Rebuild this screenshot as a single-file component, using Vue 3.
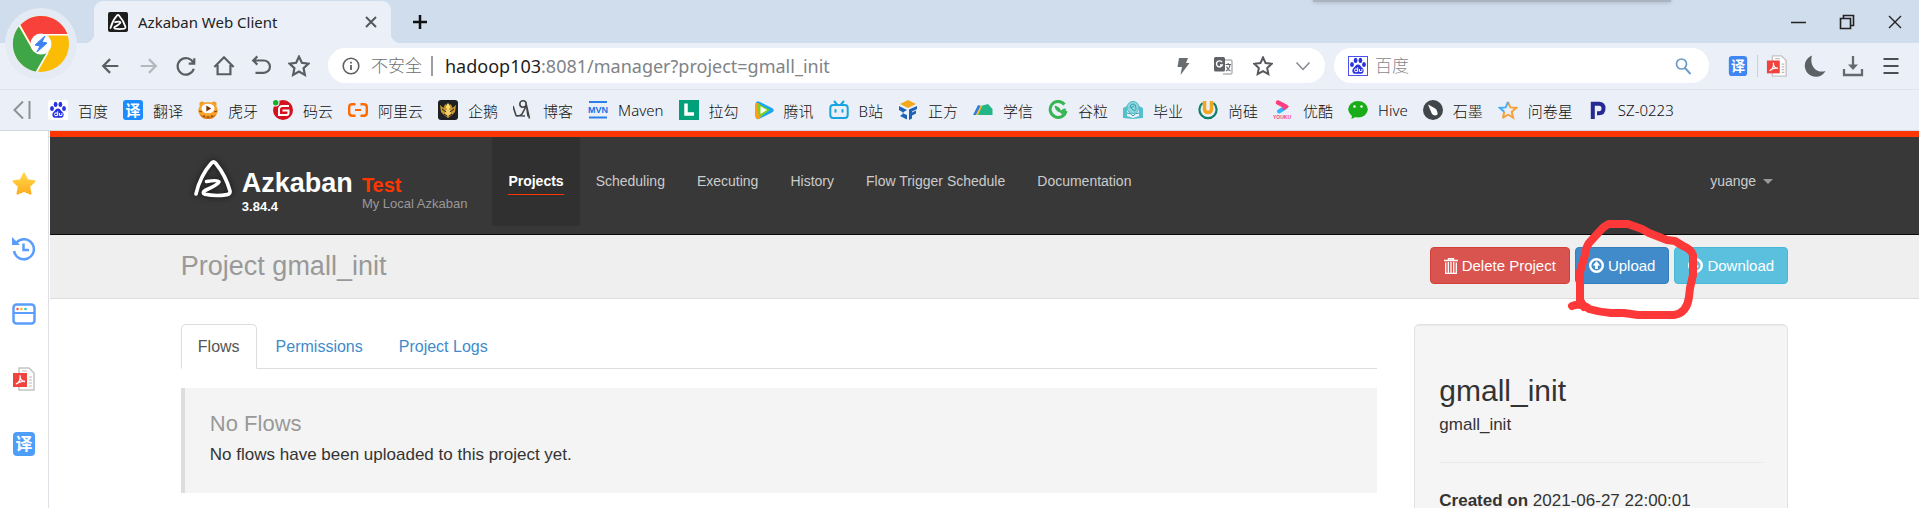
<script setup>
import { ref } from 'vue'

const T = (s, x, y, size, fill) =>
  `<text x="${x}" y="${y}" font-size="${size}" fill="${fill}" text-anchor="middle" font-weight="700" font-family="'Liberation Sans','Noto Sans CJK SC',sans-serif">${s}</text>`

const paw = `<g fill="#2932e1"><ellipse cx="4" cy="8.6" rx="1.9" ry="2.5"/><ellipse cx="7.6" cy="4.4" rx="1.9" ry="2.6"/><ellipse cx="12.4" cy="4.4" rx="1.9" ry="2.6"/><ellipse cx="16" cy="8.6" rx="1.9" ry="2.5"/><path d="M10 8.4c2 0 2.6 1.9 4.2 3.300 1.800 1.600 1.700 3.500 1 4.700-1 1.700-3 1.400-5.200 1.400s-4.200.3-5.200-1.400c-.7-1.200-.8-3.100 1-4.700C7.400 10.300 8 8.400 10 8.400z"/></g><g fill="none" stroke="#fff" stroke-width="1"><circle cx="8" cy="14.300" r="1.500"/><path d="M9.700 11.300v4.500M11.500 13v2.500h2.400V13"/></g>`
const pdf = `<path d="M7 1h10l5 5v17H7z" fill="#fff" stroke="#c4c4c4" stroke-width="1.500"/><path d="M17 10h3M17 13h3M17 16h3M17 19h3M10 4h5" stroke="#bbb" stroke-width="1.200"/><rect x="1" y="6" width="14" height="14" fill="#f0423f"/><path d="M4 17c3-1 5-4.500 4-8.500 0 4 2 6 5 6-3-.5-6.500.5-9 2.500z" fill="none" stroke="#fff" stroke-width="1.300"/>`

const bookmarks = [
  { name: '百度', svg: `<rect width="20" height="20" rx="2" fill="#fff"/>${paw}` },
  { name: '翻译', svg: `<rect width="20" height="20" rx="3" fill="#1a8cff"/>${T('译', 10, 15.5, 15, '#fff')}` },
  { name: '虎牙', svg: `<circle cx="4" cy="4" r="2.600" fill="#f59b22"/><circle cx="16" cy="4" r="2.600" fill="#f59b22"/><ellipse cx="10" cy="10.500" rx="9.800" ry="8.500" fill="#f7a531"/><path d="M2 14c4 3 12 3 16 0-1 4-4 5-8 5s-7-1-8-5z" fill="#dd7a13"/><ellipse cx="10" cy="8.500" rx="6.500" ry="4.800" fill="#fff"/><path d="M8.300 5.500l5 3-5 3z" fill="#7a3510"/><path d="M1 11l3 1M19 11l-3 1M6 17v-2M10 18v-2M14 17v-2" stroke="#8c4510" stroke-width="1.200"/>` },
  { name: '码云', svg: `<circle cx="10" cy="10" r="10" fill="#d6101e"/><circle cx="2.500" cy="2.500" r="4" fill="#edf1f8"/><circle cx="2.700" cy="2.700" r="2.700" fill="#13b027"/><path d="M16 6H9.500Q6 6 6 9.500V15h7.500q2 0 2-2v-2.500H9.500" fill="none" stroke="#fff" stroke-width="2"/>` },
  { name: '阿里云', svg: `<g fill="none" stroke="#ff6a00" stroke-width="2.400"><path d="M7.500 4.200H4.200Q1.200 4.200 1.200 7.200v5.600q0 3 3 3h3.300M12.500 4.200h3.300q3 0 3 3v5.600q0 3-3 3h-3.300"/><path d="M7 10h6" stroke-width="2"/></g>` },
  { name: '企鹅', svg: `<rect width="20" height="20" rx="3" fill="#1f2024"/><path d="M2 5l3.500 3L7 4.500h6L14.500 8 18 5l-1 7-3 3-4 3-4-3-3-3z" fill="#c9962c"/><path d="M10 2.500l2 5-2 3-2-3z" fill="#ffe27a"/><circle cx="10" cy="12.500" r="3" fill="#f4cf68"/><path d="M4 9l4 3M16 9l-4 3M6 14l3 2M14 14l-3 2" stroke="#1f2024"/>` },
  { name: '博客', svg: `<g fill="none" stroke="#444" stroke-width="1.600"><circle cx="10" cy="4" r="3.200"/><path d="M0 6l3 9.500q3 1.500 6-1.500l4.500-8.500L16.500 18.500M13.500 5.500l1.500 11M3 15.500l9 .5"/></g>` },
  { name: 'Maven', svg: `<path d="M1 2h18M1 17.500h18" stroke="#2a80e8" stroke-width="2"/>${T('MVN', 10, 13.2, 9, '#1672e4')}` },
  { name: '拉勾', svg: `<rect width="20" height="20" fill="#00a07a"/><path d="M7 3.500v10.500h8" fill="none" stroke="#fff" stroke-width="3.500"/>` },
  { name: '腾讯', svg: `<path d="M1.500 4Q2 0 6 2l12 6q3.500 2 0 4.500L6 18.500q-4 2-4.500-2Q.5 10 1.500 4z" fill="#18a5f5"/><path d="M1.200 5Q1.500 2 4 3l9 7-8 9q-3 .8-3.500-2.500Q.7 10 1.200 5z" fill="#ff9c1a"/><path d="M3.500 3.500l12.500 6.500L5 17.500z" fill="#7ad21f"/><path d="M6.500 6.300l6.500 3.700-6.500 4z" fill="#fff"/>` },
  { name: 'B站', svg: `<g fill="none" stroke="#16a5df" stroke-width="2" stroke-linecap="round"><rect x="1.300" y="5" width="17.400" height="13" rx="3"/><path d="M5.500 1.500L8 4.500M14.500 1.500L12 4.500M6.500 10v1.800M13.500 10v1.800"/></g>` },
  { name: '正方', svg: `<path d="M10 0l8 4-8 4-8-4z" fill="#f6a81b"/><path d="M1 6l8 4-5 3 5 2v4.500l-7-3.500 4-3-5-3zM11 9.500L19 6v3l-5 2.500v1l4-2v3l-4 2v3l-3 1.500z" fill="#1f62b5"/>` },
  { name: '学信', svg: `<path d="M0 15L5 5l3 1-5 9z" fill="#2f7be0"/><path d="M3 15L8 5l2 1-4 9z" fill="#f6be28"/><path d="M5 15l4.500-9.500L15 4l4.500 5v6z" fill="#22b588"/>` },
  { name: '谷粒', svg: `<path d="M16.500 4.500A8 8 0 1 0 18 11" fill="none" stroke="#36b552" stroke-width="3"/><path d="M7 6q5 1 6 6-5 0-6-6zM13 13q0-4 4.500-4-.5 5-4.500 4zM12 11l3 4" fill="#36b552" stroke="#36b552"/>` },
  { name: '毕业', svg: `<path d="M0 8l4-2v10l6 2 6-2V6l4 2v10l-10 1L0 18z" fill="#55bfcb"/><circle cx="10" cy="7.500" r="6" fill="#8fd7df" stroke="#4cb6c4"/><path d="M7 8q0-4 3-4t3 4-3 2-1-3 2 0M4 13q4 0 6 3 2-3 6-3" fill="none" stroke="#2c9fae"/>` },
  { name: '尚硅', svg: `<path d="M4.500 3A8.600 8.600 0 1 0 15.500 3" fill="none" stroke="#0d7f68" stroke-width="2.200"/><path d="M6.500 1v7.500q0 4 3.500 4t3.500-4V1" fill="none" stroke="#f4a51f" stroke-width="3.500"/>` },
  { name: '优酷', svg: `<path d="M5 2.500l7.500 4" fill="none" stroke="#ff3d7f" stroke-width="4.500" stroke-linecap="round"/><path d="M6 11.500l7-4.500" stroke="#2bb4ff" stroke-width="4" stroke-linecap="round"/><path d="M11 5.500l2 1.200-2 1.500" fill="none" stroke="#ff3d7f" stroke-width="3.500" stroke-linecap="round"/>${T('YOUKU', 9, 19, 5, '#f5427e')}` },
  { name: 'Hive', svg: `<ellipse cx="10" cy="9.300" rx="9.800" ry="8.300" fill="#1aad19"/><path d="M4 15l-.5 4 5-2.500z" fill="#1aad19"/><circle cx="6.500" cy="6.500" r="1.200" fill="#fff"/><circle cx="13.500" cy="6.500" r="1.200" fill="#fff"/>` },
  { name: '石墨', svg: `<circle cx="10" cy="10" r="10" fill="#41464b"/><path d="M5 4.500l6.500 3.500q3.500 2.500 3 6.500-3 2-5.500-.5z" fill="#fff"/>` },
  { name: '问卷星', svg: `<path d="M10 2l2.300 5.400 5.900.5-4.500 3.900 1.400 5.800L10 14.500" fill="none" stroke="#f6a13a" stroke-width="2"/><path d="M4.500 18.200l5.500-3.700M4.900 17.600l1.400-5.800" stroke="#f6a13a" stroke-width="2"/><path d="M6.300 11.800L1.800 7.900l5.900-.5L10 2" fill="none" stroke="#4aaef5" stroke-width="2"/>` },
  { name: 'SZ-0223', svg: `<path d="M4.800 19V3.800h6.200q4.500 0 4.500 4.700T11 13.200h-2" fill="none" stroke="#262a94" stroke-width="4"/>` },
]

const navButtons = [
  { label: '后退', d: 'M20 12H4M11 4.500L3.500 12l7.500 7.500', c: '#5a5d62' },
  { label: '前进', d: 'M4 12h16M13 4.500l7.500 7.500-7.500 7.500', c: '#b4b8be' },
  { label: '刷新', d: 'M20 8.500A9 9 0 1 0 20.500 15M21 3.500v6h-6', c: '#5a5d62' },
  { label: '主页', d: 'M1.500 13L12 2.500 22.500 13M5 11v10h14V11', c: '#5a5d62' },
  { label: '恢复', d: 'M4 6h11a6 6 0 0 1 0 13.500H6M8 1.500L3.500 6 8 10.500', c: '#5a5d62' },
  { label: '收藏', d: 'M12 1.800l3.100 6.700 7.300.9-5.400 5 1.400 7.300-6.400-3.600-6.400 3.600L7 14.400l-5.400-5 7.300-.9z', c: '#5a5d62' },
]

const yi = (c) => `<rect x="1" width="22" height="24" rx="4" fill="${c}"/>${T('译', 12, 18, 17, '#fff')}`
const sideTools = [
  { label: '收藏夹', svg: `<defs><linearGradient id="sg" x2="0" y2="1"><stop stop-color="#ffd84a"/><stop offset="1" stop-color="#ffad1f"/></linearGradient></defs><path d="M12 1.500l3.200 6.700 7.300 1-5.300 5.100 1.300 7.400L12 18.800l-6.500 2.900 1.300-7.400L1.500 9.200l7.300-1z" fill="url(#sg)" stroke="url(#sg)" stroke-width="2" stroke-linejoin="round"/>` },
  { label: '历史', svg: `<path d="M4.500 5.500A10 10 0 1 1 2 14" fill="none" stroke="#5a9dfa" stroke-width="2.500"/><path d="M0 0l8 8H0z" fill="#5a9dfa"/><path d="M11.500 6.500V13H17" fill="none" stroke="#5a9dfa" stroke-width="2.500"/>` },
  { label: '窗口', svg: `<rect x="1.500" y="2.500" width="21" height="19" rx="3" fill="#fff" stroke="#5a9dfa" stroke-width="2.500"/><path d="M2 11h20" stroke="#5a9dfa" stroke-width="2"/><circle cx="5.500" cy="7" r="1.300" fill="#f55"/><circle cx="9.500" cy="7" r="1.300" fill="#fb3"/><circle cx="13.500" cy="7" r="1.300" fill="#2cb"/>` },
  { label: 'PDF', svg: pdf },
  { label: '翻译', svg: yi('#4d9ef9') },
]

const menu = ['Projects', 'Scheduling', 'Executing', 'History', 'Flow Trigger Schedule', 'Documentation']
const tabs = ['Flows', 'Permissions', 'Project Logs']
const activeTab = ref('Flows')
const query = ref('')
</script>

<template>
  <div class="window">
    <header class="chrome">
      <div class="tabstrip">
        <div class="tab">
          <svg class="i20" viewBox="0 0 20 20"><rect width="20" height="20" rx="2" fill="#1d1d1d" /><path d="M2.500 16Q4.500 8.500 9 3.500q1-1 2 0Q15.500 8.500 17.500 15q.2 1.300-1.200 1.600-5 .9-9.300 0c-1.500-.6-.5-1.400 0-1.800q5-2.800 5.500-4.300-.5-1.300-5.500-.4" fill="none" stroke="#fff" stroke-width="1.800" stroke-linecap="round" stroke-linejoin="round" /></svg>
          <span class="tab-title">Azkaban Web Client</span>
          <button class="bare" aria-label="关闭标签页"><svg width="12" height="12" viewBox="0 0 12 12"><path d="M1 1l10 10M11 1L1 11" stroke="#55585c" stroke-width="2" /></svg></button>
        </div>
        <button class="bare newtab" aria-label="新标签页"><svg width="16" height="16" viewBox="0 0 16 16"><path d="M8 1v14M1 8h14" stroke="#111" stroke-width="2.500" /></svg></button>
        <div class="peek"></div>
        <div class="wincontrols">
          <button class="bare" aria-label="最小化"><svg width="16" height="16" viewBox="0 0 16 16"><path d="M0 8.500h15" stroke="#222" stroke-width="1.500" /></svg></button>
          <button class="bare" aria-label="还原"><svg width="16" height="16" viewBox="0 0 16 16"><path d="M1.500 4.500h10v10h-10zM4.500 4V1.500h10v10H12" fill="none" stroke="#222" stroke-width="1.600" /></svg></button>
          <button class="bare" aria-label="关闭"><svg width="16" height="16" viewBox="0 0 16 16"><path d="M2 2l12 12M14 2L2 14" stroke="#222" stroke-width="1.400" /></svg></button>
        </div>
      </div>

      <svg class="brand" viewBox="0 0 72 72">
        <circle cx="36" cy="36" r="36" fill="#e4ebf5" />
        <circle cx="36" cy="36" r="28" fill="#fbbc05" />
        <path d="M15.500 17A28 28 0 0 1 62.500 26.500H36L26 36z" fill="#f8413a" />
        <path d="M14 18.500A28 28 0 0 0 32 63.700L43 44 28 43z" fill="#3fa648" />
        <path d="M63 26.800H36M14.500 17.500L28 41M31.500 64L43 44" fill="none" stroke="#fff" stroke-width="1.600" />
        <circle cx="36" cy="36" r="10.500" fill="#fff" />
        <path d="M40 28l-10 9 5 1-3 6 10-9-5-1z" fill="#3d82f5" stroke="#3d82f5" />
      </svg>

      <div class="toolbar">
        <nav class="navs" aria-label="导航">
          <button v-for="b in navButtons" :key="b.label" class="bare" :aria-label="b.label">
            <svg width="22" height="22" viewBox="0 0 24 24"><path :d="b.d" fill="none" :stroke="b.c" stroke-width="2.400" /></svg>
          </button>
        </nav>
        <div class="pill address">
          <svg width="18" height="18" viewBox="0 0 18 18"><circle cx="9" cy="9" r="7.800" fill="none" stroke="#5c5f63" stroke-width="1.600" /><path d="M9 8v5M9 4.800v1.700" stroke="#5c5f63" stroke-width="1.800" /></svg>
          <span class="insecure">不安全</span>
          <div class="url" role="textbox" aria-label="地址"><b>hadoop103</b>:8081/manager?project=gmall_init</div>
          <div class="pill-icons">
            <button class="bare" aria-label="极速模式"><svg width="20" height="20" viewBox="0 0 20 20"><path d="M6 2h9l-2 5h3.500L7.500 19 9 11H4.500z" fill="#6a6d70" /></svg></button>
            <button class="bare" aria-label="翻译网页"><svg width="20" height="20" viewBox="0 0 20 20"><path d="M9 4h9q1 0 1 1v12q0 1-1 1h-8" fill="#fff" stroke="#8a8d91" /><rect x="1" y="1" width="11" height="14.500" rx="1.500" fill="#5f6368" /><path d="M9 6.200a3 3 0 1 0 .3 2.800H7" fill="none" stroke="#fff" stroke-width="1.400" /><path d="M12.500 8.500H18M15.200 7v1.500M13 15q3.500-2 4-6.500M13.500 10.500q1 3 4 4.500" fill="none" stroke="#5f6368" stroke-width="1.100" /></svg></button>
            <button class="bare" aria-label="添加收藏"><svg width="20" height="20" viewBox="0 0 24 24"><path :d="navButtons[5].d" fill="none" stroke="#55585c" stroke-width="2.400" /></svg></button>
            <button class="bare" aria-label="展开"><svg width="20" height="20" viewBox="0 0 20 20"><path d="M3.500 6.500l6.500 7 6.500-7" fill="none" stroke="#85888c" stroke-width="1.500" /></svg></button>
          </div>
        </div>
        <label class="pill search">
          <svg class="i20" viewBox="0 0 20 20"><rect x=".5" y=".5" width="19" height="19" fill="#fff" stroke="#4a52ea" /><g v-html="paw"></g></svg>
          <input v-model="query" type="text" placeholder="百度" aria-label="搜索" />
          <svg width="18" height="18" viewBox="0 0 18 18"><circle cx="7.500" cy="7" r="5" fill="none" stroke="#6d9bc7" stroke-width="1.700" /><path d="M11 11l5.500 6" stroke="#6d9bc7" stroke-width="1.900" /></svg>
        </label>
        <div class="tools">
          <button class="bare" aria-label="翻译"><svg width="22" height="20" viewBox="0 0 24 24" v-html="yi('#3f86f2')"></svg></button>
          <span class="sep"></span>
          <button class="bare" aria-label="PDF 工具"><svg width="22" height="22" viewBox="0 0 24 24" v-html="pdf"></svg></button>
          <button class="bare" aria-label="夜间模式"><svg width="22" height="22" viewBox="0 0 22 22"><path d="M8 .5a11 11 0 1 0 13.500 15.500C12 19 5 10 8 .5z" fill="#5d6064" /></svg></button>
          <button class="bare" aria-label="下载"><svg width="22" height="22" viewBox="0 0 22 22"><path d="M2 14v6h18v-6M11 1v10" fill="none" stroke="#66696d" stroke-width="2.300" /><path d="M6 9.500h10L11 15z" fill="#66696d" /></svg></button>
          <button class="bare" aria-label="菜单"><svg width="22" height="22" viewBox="0 0 22 22"><path d="M3.500 4h15M3.500 11h15M3.500 18h15" stroke="#4b4e52" stroke-width="2.200" /></svg></button>
        </div>
      </div>

      <nav class="bookmarks" aria-label="书签">
        <button class="bare collapse" aria-label="收起书签栏"><svg width="18" height="20" viewBox="0 0 18 20"><path d="M10 1.500L1.500 10l8.500 8.500M16.500 1v18" fill="none" stroke="#8d9095" stroke-width="2" /></svg></button>
        <a v-for="b in bookmarks" :key="b.name" href="#"><svg class="i20" viewBox="0 0 20 20" v-html="b.svg"></svg>{{ b.name }}</a>
      </nav>
    </header>

    <div class="body">
      <aside class="rail">
        <button v-for="s in sideTools" :key="s.label" class="bare" :aria-label="s.label"><svg width="24" height="24" viewBox="0 0 24 24" v-html="s.svg"></svg></button>
      </aside>

      <div class="page">
        <header class="topnav">
          <div class="wrap topnav-in">
            <a class="logo" href="#">
              <svg width="48" height="44" viewBox="0 0 48 44"><path d="M8 36Q12 18 23.500 5Q25.500 3 27.500 5Q38 18 42 33Q42.600 36 39 36.600Q28 38.500 17 36.300Q13.500 35 17 32.500Q30 26.500 31 23.800Q30.500 21.500 18.500 23.500" fill="none" stroke="#fff" stroke-width="3.600" stroke-linecap="round" stroke-linejoin="round" /></svg>
              <span class="names"><strong>Azkaban</strong><small>3.84.4</small></span>
            </a>
            <div class="instance"><strong>Test</strong><span>My Local Azkaban</span></div>
            <nav class="menu">
              <a v-for="(m, i) in menu" :key="m" href="#" :class="{ active: i === 0 }"><span>{{ m }}</span></a>
            </nav>
            <button class="bare user">yuange<i class="caret"></i></button>
          </div>
        </header>

        <section class="titlebar">
          <div class="wrap titlebar-in">
            <h1>Project gmall_init</h1>
            <div class="actions">
              <button class="btn danger"><svg width="14" height="16" viewBox="0 0 14 16"><path d="M0 2.500h14M4.500 2V.700h5V2" fill="none" stroke="#fff" stroke-width="1.400" /><path d="M1.700 4.500v11h10.600v-11M4.300 4v11M7 4v11M9.700 4v11" fill="none" stroke="#fff" stroke-width="1.300" /></svg>Delete Project</button>
              <div class="marked">
                <button class="btn primary"><svg width="15" height="15" viewBox="0 0 15 15"><circle cx="7.500" cy="7.500" r="6.300" fill="none" stroke="#fff" stroke-width="2.400" /><path d="M7.500 3l3.700 4.500H8.900V11H6.100V7.500H3.800z" fill="#fff" /></svg>Upload</button>
                <svg class="scribble" width="150" height="120" viewBox="1560 210 150 120"><path d="M1573 306Q1577 304 1582 305T1590 309Q1600 312 1612 313H1625L1639 315H1675Q1688 313 1690 297L1691 288 1694 275V255Q1692 249 1684 246L1676 241 1668 240 1650 233 1643 229 1629 224H1610Q1605 226 1600 232L1590 243Q1587 247 1586 255L1581 272V300L1585 307" fill="none" stroke="#fc3838" stroke-width="8" stroke-linecap="round" stroke-linejoin="round" /></svg>
              </div>
              <button class="btn info"><svg width="15" height="15" viewBox="0 0 15 15"><circle cx="7.500" cy="7.500" r="6.300" fill="none" stroke="#fff" stroke-width="2.400" /><path d="M7.500 12L3.800 7.500h2.300V4h2.800v3.500h2.300z" fill="#fff" /></svg>Download</button>
            </div>
          </div>
        </section>

        <main class="wrap columns">
          <section>
            <div class="tabs" role="tablist">
              <button v-for="t in tabs" :key="t" role="tab" :aria-selected="t === activeTab" :class="{ on: t === activeTab }" @click="activeTab = t">{{ t }}</button>
            </div>
            <div class="callout">
              <h4>No Flows</h4>
              <p>No flows have been uploaded to this project yet.</p>
            </div>
          </section>
          <aside class="well">
            <h3>gmall_init</h3>
            <p>gmall_init</p>
            <hr />
            <p><strong>Created on</strong> 2021-06-27 22:00:01</p>
          </aside>
        </main>
      </div>
    </div>
  </div>
</template>

<style>
body { margin: 0; overflow: hidden; }
</style>

<style scoped>
* { box-sizing: border-box; }
h1, h3, h4, p { margin: 0; font-weight: 400; }
svg { display: block; flex: none; }
a { text-decoration: none; color: inherit; }
.window { height: 100vh; display: flex; flex-direction: column; overflow: hidden; font-family: 'Liberation Sans', Arial, 'Noto Sans CJK SC', sans-serif; background: #fff; }
.bare { border: 0; padding: 0; background: none; display: flex; align-items: center; justify-content: center; font: inherit; color: inherit; }
.i20 { width: 20px; height: 20px; }

.chrome { position: relative; background: #ebf0f8; font-family: 'Noto Sans', 'Noto Sans CJK SC', sans-serif; font-weight: 300; border-bottom: 1px solid #cfd8e3; }
.tabstrip { position: relative; height: 43px; background: #d0ddec; display: flex; align-items: center; padding: 0 16px 0 94px; }
.tab { position: relative; align-self: flex-end; width: 297px; height: 42px; background: #ebf0f8; border-radius: 9px 9px 0 0; display: flex; align-items: center; gap: 10px; padding: 0 14px; }
.tab::before, .tab::after { content: ''; position: absolute; bottom: 0; width: 9px; height: 9px; }
.tab::before { right: 100%; background: radial-gradient(circle at 0 0, transparent 9px, #ebf0f8 9px); }
.tab::after { left: 100%; background: radial-gradient(circle at 100% 0, transparent 9px, #ebf0f8 9px); }
.tab-title { flex: 1; font-size: 15px; font-weight: 400; color: #222; }
.newtab { margin-left: 21px; }
.peek { position: absolute; left: 68.4%; top: 0; width: 358px; height: 2px; background: #a9b4c0; box-shadow: 0 0 4px #8d99a6; }
.wincontrols { margin-left: auto; display: flex; gap: 32px; }
.brand { position: absolute; left: 5px; top: 8px; width: 72px; height: 72px; }

.toolbar { height: 46px; display: flex; align-items: center; padding: 0 17px 1px 92px; }
.navs { width: 226px; display: grid; grid-template-columns: repeat(6, 1fr); margin-right: 10px; }
.pill { background: #fff; border-radius: 18px; height: 35px; display: flex; align-items: center; min-width: 0; }
.address { flex: 971 1 0; padding: 0 12px 0 14px; margin-right: 9px; }
.insecure { font-size: 17px; line-height: 20px; color: #6c6f73; margin-left: 11px; padding-right: 9px; border-right: 2px solid #9a9da1; margin-right: 12px; white-space: nowrap; }
.url { flex: 1; font-size: 18px; font-weight: 400; color: #808387; white-space: nowrap; }
.url b { font-weight: 400; color: #1d1d1d; }
.pill-icons { display: flex; gap: 20px; }
.search { flex: 344 1 0; padding: 0 17px 0 14px; margin-right: 18px; }
.search input { flex: 1; min-width: 0; border: 0; outline: 0; background: none; font: 300 17px 'Noto Sans', 'Noto Sans CJK SC', sans-serif; color: #333; margin: 0 7px; padding: 0; }
.search input::placeholder { color: #85888c; opacity: 1; }
.tools { display: flex; align-items: center; gap: 16px; }
.sep { width: 1px; height: 22px; background: #c2d2e4; margin: 0 -8px; }

.bookmarks { height: 41px; border-top: 1px solid #dfe3ea; display: flex; align-items: center; gap: 15px; padding-left: 13px; font-size: 15px; color: #111; white-space: nowrap; overflow: hidden; }
.bookmarks a { display: flex; align-items: center; gap: 10px; }
.collapse { margin-right: 2px; }

.body { flex: 1; min-height: 0; display: flex; }
.rail { flex: none; width: 49px; border-right: 1px solid #dcdfe3; display: flex; flex-direction: column; align-items: center; gap: 41px; padding-top: 41px; }
.page { flex: 1; min-width: 0; margin-left: 1px; }
.wrap { width: 86%; margin: 0 auto; }

.topnav { border-top: 6px solid #ff3601; background: #383838; border-bottom: 1px solid #0a0a0a; }
.topnav-in { display: flex; height: 97px; align-items: flex-start; font-size: 14px; color: #ccc; }
.logo { display: flex; padding-left: 7px; color: #fff; }
.logo svg { margin: 21px 6px 0 0; filter: drop-shadow(0 0 3px #111); }
.names { display: flex; flex-direction: column; padding-top: 31px; }
.names strong { font-size: 27px; line-height: 31px; }
.names small { font-size: 13px; line-height: 16px; font-weight: 700; }
.instance { margin-left: 9px; padding-top: 37px; display: flex; flex-direction: column; }
.instance strong { font-size: 20px; line-height: 22px; color: #ff3601; }
.instance span { font-size: 13px; line-height: 15px; color: #999; }
.menu { display: flex; margin-left: 25px; }
.menu a { padding: 34px 16px 0; height: 89px; }
.menu span { display: block; line-height: 20px; padding-bottom: 3px; }
.menu .active { background: #303030; color: #fff; font-weight: 700; }
.menu .active span { border-bottom: 1px solid #ff3601; }
.user { margin-left: auto; padding: 34px 15px 0 0; line-height: 20px; gap: 7px; }
.caret { border: 5px solid transparent; border-top-color: #999; border-bottom: 0; }

.titlebar { background: #efefef; border-bottom: 1px solid #ddd; }
.titlebar-in { height: 63px; padding-bottom: 2px; display: flex; align-items: center; justify-content: space-between; }
.titlebar h1 { font-size: 27px; line-height: 32px; color: #999; }
.actions { display: flex; gap: 5px; }
.marked { position: relative; z-index: 1; }
.scribble { position: absolute; left: -16px; top: -37px; pointer-events: none; }
.btn { height: 37px; display: flex; align-items: center; gap: 4px; padding: 0 13px; border: 1px solid; border-radius: 4px; font: 15px 'Liberation Sans', Arial, sans-serif; color: #fff; white-space: nowrap; }
.danger { background: #d9534f; border-color: #d43f3a; }
.primary { background: #428bca; border-color: #357ebd; }
.info { background: #5bc0de; border-color: #46b8da; }

.columns { display: grid; grid-template-columns: 1197fr 374fr; gap: 37px; padding-top: 25px; align-items: start; }
.tabs { display: flex; gap: 2px; border-bottom: 1px solid #ddd; }
.tabs button { font: 16px/22px 'Liberation Sans', Arial, sans-serif; color: #428bca; background: none; border: 1px solid transparent; border-radius: 5px 5px 0 0; padding: 11px 16px 10px; margin-bottom: -1px; }
.tabs .on { color: #555; background: #fff; border-color: #ddd #ddd #fff; }
.callout { margin-top: 19px; background: #f4f4f4; border-left: 4px solid #ddd; padding: 23px 25px 26px; color: #333; font-size: 17px; }
.callout h4 { font-size: 22px; line-height: 26px; color: #999; margin-bottom: 5px; }
.callout p, .well p { line-height: 25px; }
.well { background: #f5f5f5; border: 1px solid #e3e3e3; border-radius: 5px; box-shadow: inset 0 1px 1px rgba(0, 0, 0, .05); padding: 24px; color: #333; font-size: 17px; }
.well h3 { font-size: 30px; line-height: 33px; margin: 25px 0 5px; }
.well hr { border: 0; border-top: 1px solid #eaeaea; margin: 25px 0; }
</style>
